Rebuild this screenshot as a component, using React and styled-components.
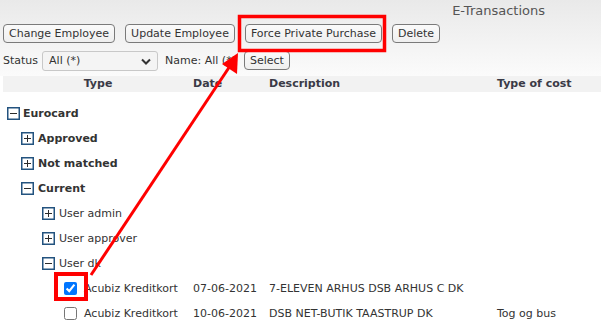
import React from "react";
import styled, { createGlobalStyle } from "styled-components";

const GlobalStyle = createGlobalStyle`
  body {
    margin: 0;
    background: #fff;
  }
`;

const Page = styled.div`
  position: relative;
  width: 601px;
  height: 332px;
  overflow: hidden;
  font-family: "DejaVu Sans", Verdana, sans-serif;
  font-size: 11px;
  color: #333;
`;

const Top = styled.div`
  background: linear-gradient(#e9e9e9, #fbfbfb);
  padding: 3px 3px 6px;
  height: 67px;
`;

const Title = styled.div`
  font-size: 13px;
  color: #555;
  text-align: right;
  padding-right: 53px;
  height: 20px;
  line-height: 16px;
`;

const Toolbar = styled.div`
  display: flex;
  gap: 10px;
  margin-top: 1px;
`;

const Button = styled.button`
  font-family: inherit;
  font-size: 11px;
  color: #333;
  height: 19px;
  padding: 0 5px;
  border: 1px solid #7a7a7a;
  border-radius: 4px;
  background: linear-gradient(#fafafa, #efefef);
  line-height: 16px;
  cursor: pointer;
`;

const FilterRow = styled.div`
  display: flex;
  align-items: center;
  margin-top: 8px;
  height: 19px;
`;

const Label = styled.span`
  margin-right: ${(p) => p.gap || 0}px;
`;

const SelectWrap = styled.span`
  position: relative;
  display: inline-flex;
  margin-right: 7px;
`;

const Select = styled.select`
  appearance: none;
  font-family: inherit;
  font-size: 11px;
  color: #333;
  width: 116px;
  height: 20px;
  padding: 0 6px;
  border: 1px solid #c8c8c8;
  border-radius: 3px;
  background: #f4f4f4;
`;

const Chevron = styled.svg`
  position: absolute;
  right: 7px;
  top: 7px;
  pointer-events: none;
`;

const HeaderRow = styled.div`
  display: grid;
  grid-template-columns: 190px 76px 228px 1fr;
  background: #f2f2f2;
  height: 16px;
  line-height: 16px;
  font-weight: bold;
  color: #3a3a46;
  margin-left: 3px;
`;

const HeadCell = styled.div`
  text-align: ${(p) => (p.center ? "center" : "left")};
`;

const Tree = styled.div`
  padding-top: 9px;
`;

const Row = styled.div`
  display: grid;
  grid-template-columns: 193px 76px 228px 1fr;
  height: 25px;
  align-items: center;
`;

const TypeCell = styled.div`
  display: flex;
  align-items: center;
  gap: ${(p) => p.gap}px;
  padding-left: ${(p) => p.indent}px;
  font-weight: ${(p) => (p.bold ? "bold" : "normal")};
  white-space: nowrap;
`;

const Cell = styled.div`
  white-space: nowrap;
`;

const Check = styled.input`
  margin: 0;
  width: 13px;
  height: 13px;
`;

const Overlay = styled.svg`
  position: absolute;
  left: 0;
  top: 0;
  pointer-events: none;
`;

const Expander = ({ open }) => (
  <svg width="13" height="13" viewBox="0 0 13 13">
    <rect x="0.75" y="0.75" width="11.5" height="11.5" fill="#fff" stroke="#23537f" strokeWidth="1.5" />
    <line x1="3" y1="6.5" x2="10" y2="6.5" stroke="#2b2b2b" strokeWidth="1" />
    {!open && <line x1="6.5" y1="3" x2="6.5" y2="10" stroke="#2b2b2b" strokeWidth="1" />}
  </svg>
);

const groups = [
  { label: "Eurocard", indent: 7, gap: 3, bold: true, open: true },
  { label: "Approved", indent: 21, gap: 4, bold: true },
  { label: "Not matched", indent: 21, gap: 4, bold: true },
  { label: "Current", indent: 21, gap: 4, bold: true, open: true },
  { label: "User admin", indent: 42, gap: 4 },
  { label: "User approver", indent: 42, gap: 4 },
  { label: "User dk", indent: 42, gap: 4, open: true },
];

// last row is only peeking in at the bottom edge
const items = [
  { checked: true, type: "Acubiz Kreditkort", date: "07-06-2021", desc: "7-ELEVEN ARHUS DSB ARHUS C DK", cost: "" },
  { checked: false, type: "Acubiz Kreditkort", date: "10-06-2021", desc: "DSB NET-BUTIK TAASTRUP DK", cost: "Tog og bus" },
  { checked: false, type: "", date: "", desc: "", cost: "" },
];

const App = () => (
  <Page>
    <GlobalStyle />
    <Top>
      <Title>E-Transactions</Title>
      <Toolbar>
        <Button>Change Employee</Button>
        <Button>Update Employee</Button>
        <Button>Force Private Purchase</Button>
        <Button>Delete</Button>
      </Toolbar>
      <FilterRow>
        <Label gap={4}>Status</Label>
        <SelectWrap>
          <Select defaultValue="all">
            <option value="all">All (*)</option>
          </Select>
          <Chevron width="10" height="7" viewBox="0 0 10 7">
            <path d="M1 1.5 L5 5.5 L9 1.5" fill="none" stroke="#333" strokeWidth="2" />
          </Chevron>
        </SelectWrap>
        <Label gap={8}>Name: All (*)</Label>
        <Button>Select</Button>
      </FilterRow>
    </Top>
    <HeaderRow>
      <HeadCell center>Type</HeadCell>
      <HeadCell>Date</HeadCell>
      <HeadCell>Description</HeadCell>
      <HeadCell>Type of cost</HeadCell>
    </HeaderRow>
    <Tree>
      {groups.map((g) => (
        <Row key={g.label}>
          <TypeCell indent={g.indent} gap={g.gap} bold={g.bold}>
            <Expander open={g.open} />
            {g.label}
          </TypeCell>
        </Row>
      ))}
      {items.map((it, i) => (
        <Row key={i}>
          <TypeCell indent={64} gap={7}>
            <Check type="checkbox" defaultChecked={it.checked} />
            {it.type}
          </TypeCell>
          <Cell>{it.date}</Cell>
          <Cell>{it.desc}</Cell>
          <Cell>{it.cost}</Cell>
        </Row>
      ))}
    </Tree>
    <Overlay width="601" height="332">
      <rect x="239.5" y="16.5" width="145" height="34" fill="none" stroke="#f00" strokeWidth="3.5" />
      <rect x="56" y="274" width="30" height="25" fill="none" stroke="#f00" strokeWidth="4" />
      <line x1="91" y1="275" x2="232" y2="63" stroke="#f00" strokeWidth="3" />
      <polygon points="238,53 237,74 222,64" fill="#f00" />
    </Overlay>
  </Page>
);

export default App;
